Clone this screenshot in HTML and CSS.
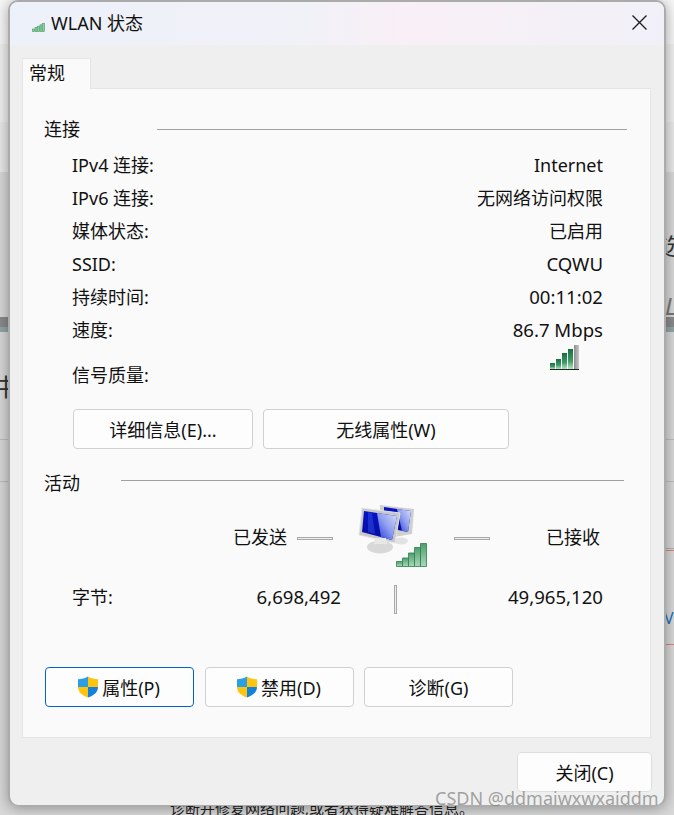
FILE: index.html
```html
<!DOCTYPE html>
<html lang="zh-CN">
<head>
<meta charset="utf-8">
<title>WLAN 状态</title>
<link rel="stylesheet" href="styles.css">
</head>
<body>
<div class="backdrop">
  <div class="bg-band bg-top"></div>
  <div class="bg-band bg-mid"></div>
  <div class="bg-band bg-mid2"></div>
  <div class="bg-band bg-dark"></div>
  <div class="bg-band bg-dark2"></div>
  <div class="bg-rule bg-rule-a"></div>
  <div class="bg-rule bg-rule-b"></div>
  <div class="bg-rule bg-rule-c"></div>
  <div class="bg-rule bg-red-a"></div>
  <div class="bg-rule bg-red-b"></div>
  <span class="bg-text bg-left">中</span>
  <span class="bg-text bg-right">选</span>
  <span class="bg-text bg-right-l">L</span>
  <span class="bg-text bg-right2">V</span>
  <span class="bg-text bg-bottom">诊断并修复网络问题,或者获得疑难解答信息。</span>
</div>

<main class="window">
  <header class="titlebar">
    <svg class="title-icon" viewBox="0 0 13 9" width="13" height="9">
      <g fill="#8fd0a0" stroke="#4a9a66" stroke-width=".6">
        <rect x=".5" y="6" width="2" height="2.600"/>
        <rect x="3" y="4.600" width="2" height="4"/>
        <rect x="5.500" y="3.200" width="2" height="5.400"/>
        <rect x="8" y="1.800" width="2" height="6.800"/>
        <rect x="10.500" y=".4" width="2" height="8.200"/>
      </g>
    </svg>
    <span class="title-text">WLAN 状态</span>
    <svg class="close-x" viewBox="0 0 15 15" width="15" height="15">
      <path d="M.5.5 14.500 14.500M14.500.5.5 14.500" stroke="#1a1a1a" stroke-width="1.300" fill="none"/>
    </svg>
  </header>

  <div class="tabs"><div class="tab">常规</div></div>

  <section class="panel">
    <div class="group-head head-conn"><span class="group-label">连接</span><span class="group-line"></span></div>
    <dl class="info">
      <div class="row"><dt>IPv4 连接:</dt><dd>Internet</dd></div>
      <div class="row"><dt>IPv6 连接:</dt><dd>无网络访问权限</dd></div>
      <div class="row"><dt>媒体状态:</dt><dd>已启用</dd></div>
      <div class="row"><dt>SSID:</dt><dd class="num">CQWU</dd></div>
      <div class="row"><dt>持续时间:</dt><dd class="num">00:11:02</dd></div>
      <div class="row"><dt>速度:</dt><dd class="num">86.7 Mbps</dd></div>
      <div class="row row-signal">
        <dt>信号质量:</dt>
        <dd>
          <svg class="signal" viewBox="0 0 31 26" width="31" height="26">
            <defs>
              <linearGradient id="bar" x1="0" y1="0" x2="0" y2="1">
                <stop offset="0" stop-color="#14703f"/>
                <stop offset=".6" stop-color="#3f9c68"/>
                <stop offset="1" stop-color="#b6e4c6"/>
              </linearGradient>
              <linearGradient id="barg" x1="0" y1="0" x2="1" y2="0">
                <stop offset="0" stop-color="#8c8c8c"/>
                <stop offset="1" stop-color="#c8c8c8"/>
              </linearGradient>
            </defs>
            <rect x="1" y="19" width="5" height="6" fill="url(#bar)"/>
            <rect x="7" y="15" width="5" height="10" fill="url(#bar)"/>
            <rect x="13" y="9" width="5" height="16" fill="url(#bar)"/>
            <rect x="19" y="5" width="5" height="20" fill="url(#bar)"/>
            <rect x="25" y="1" width="5" height="24" fill="url(#barg)"/>
            <path d="M1 25.500H30" stroke="#222" stroke-width="1"/>
          </svg>
        </dd>
      </div>
    </dl>
    <div class="btn-row btn-row-info">
      <button class="btn btn-detail" type="button">详细信息(E)...</button>
      <button class="btn btn-wireless" type="button">无线属性(W)</button>
    </div>

    <div class="group-head head-act"><span class="group-label">活动</span><span class="group-line"></span></div>
    <div class="activity">
      <span class="act-sent">已发送</span>
      <span class="dash"></span>
      <svg class="net" viewBox="0 0 72 66" width="72" height="66">
        <defs>
          <linearGradient id="scr" x1="0" y1="0" x2="0" y2="1">
            <stop offset="0" stop-color="#0614c8"/>
            <stop offset="1" stop-color="#060c9a"/>
          </linearGradient>
          <linearGradient id="gloss" x1="1" y1="0" x2="0" y2="1">
            <stop offset="0" stop-color="#d8defa"/>
            <stop offset=".5" stop-color="#8e9df0"/>
            <stop offset="1" stop-color="#2036dc"/>
          </linearGradient>
          <linearGradient id="sig" x1="0" y1="0" x2="0" y2="1">
            <stop offset="0" stop-color="#4f9e6e"/>
            <stop offset="1" stop-color="#a9d9b8"/>
          </linearGradient>
        </defs>
        <path d="M24 2 58 6 56 31 38 34 24 20Z" fill="#cfcfcf"/>
        <path d="M28 4 55 8 52 29 42 27 28 22Z" fill="url(#scr)"/>
        <path d="M41 6 55 8 52 29 46 28Z" fill="url(#gloss)"/>
        <ellipse cx="45" cy="38" rx="7" ry="3.500" fill="#e2e2e2"/>
        <path d="M6 5 44 10 39 40 3 32Z" fill="#c8c8c8" stroke="#e4e4e4"/>
        <path d="M8 8 41 13 36 37 6 29Z" fill="url(#scr)"/>
        <path d="M21 10 41 13 36 37 25 34Z" fill="url(#gloss)"/>
        <path d="M12 9 16 10 19 31 12 29Z" fill="#2f4ae0" opacity=".55"/>
        <ellipse cx="24" cy="44" rx="13" ry="6.500" fill="#d8d8d8"/>
        <path d="M19 35h11l1 6H18Z" fill="#e8e8e8"/>
        <g fill="url(#sig)" stroke="#2f7d50" stroke-width=".8">
          <path d="M40.500 58.500h6v5h-6Z"/>
          <path d="M46.500 55h6v8.500h-6Z"/>
          <path d="M52.500 50h6v13.500h-6Z"/>
          <path d="M58.500 44.500h6v19h-6Z"/>
          <path d="M64.500 40.500h6v23h-6Z"/>
        </g>
      </svg>
      <span class="dash dash-r"></span>
      <span class="act-recv">已接收</span>
    </div>
    <div class="bytes">
      <span class="bytes-label">字节:</span>
      <span class="bytes-sent num">6,698,492</span>
      <span class="vdash"></span>
      <span class="bytes-recv num">49,965,120</span>
    </div>
    <div class="btn-row btn-row-act">
      <button class="btn btn-act btn-focus" type="button">
        <svg class="shield" viewBox="0 0 22 22" width="22" height="22"><use href="#shield"/></svg>属性(P)
      </button>
      <button class="btn btn-act" type="button">
        <svg class="shield" viewBox="0 0 22 22" width="22" height="22"><use href="#shield"/></svg>禁用(D)
      </button>
      <button class="btn btn-act btn-last" type="button">诊断(G)</button>
    </div>
  </section>

  <footer class="footer">
    <button class="btn btn-close" type="button">关闭(C)</button>
  </footer>
</main>

<span class="watermark">CSDN @ddmaiwxwxaiddm</span>

<svg class="defs" width="0" height="0">
  <defs>
    <g id="shield">
      <path d="M11 0.500C8 2.500 4.500 3.200 1 3.200V11H11Z" fill="#2a9fe6"/>
      <path d="M11 0.500C14 2.500 17.500 3.200 21 3.200V11H11Z" fill="#ffc40d"/>
      <path d="M1 11C1 16 5 19.500 11 21.500V11Z" fill="#ffc40d"/>
      <path d="M21 11C21 16 17 19.500 11 21.500V11Z" fill="#1482d8"/>
    </g>
  </defs>
</svg>
</body>
</html>
```

FILE: styles.css
```css
* { box-sizing: border-box; }
html, body { margin: 0; padding: 0; }
body {
  width: 674px;
  height: 815px;
  position: relative;
  overflow: hidden;
  background: #d8d8d8;
  font-family: "Noto Sans", "Noto Sans CJK SC", sans-serif;
  font-size: 18px;
  color: #111;
}

/* what shows behind the dialog */
.backdrop { position: absolute; inset: 0; overflow: hidden; }
.bg-band { position: absolute; left: 0; right: 0; }
.bg-top { top: 0; height: 44px; background: #f6f6f6; }
.bg-mid { top: 44px; height: 78px; background: #efefef; }
.bg-mid2 { top: 122px; height: 50px; background: #e8e8e8; }
.bg-dark { top: 317px; height: 10px; background: #8a8a8a; }
.bg-dark2 { top: 327px; height: 5px; background: #93a5a5; }
.bg-rule { position: absolute; left: 0; right: 0; height: 1px; background: #bdbdbd; }
.bg-rule-a { top: 439px; }
.bg-rule-b { top: 481px; }
.bg-rule-c { top: 548px; left: 665px; background: #b0b0b0; }
.bg-red-a { top: 550px; left: 665px; background: #e5817f; }
.bg-red-b { top: 644px; left: 665px; background: #e5817f; }
.bg-text { position: absolute; font-size: 24px; line-height: 28px; color: #333; }
.bg-left { left: -6px; top: 373px; }
.bg-right { left: 660px; top: 232px; }
.bg-right-l { left: 665px; top: 292px; color: #777; font-style: italic; }
.bg-right2 { left: 664px; top: 604px; color: #1f6fc0; font-size: 16px; }
.bg-bottom { left: 170px; top: 797px; font-size: 15px; line-height: 22px; color: #222; }

/* dialog */
.window {
  position: absolute;
  left: 8px;
  top: 0;
  width: 658px;
  height: 806px;
  display: flex;
  flex-direction: column;
  background: #efefef;
  border: 2px solid #ababab;
  border-bottom-width: 1px;
  border-radius: 10px;
  box-shadow: 0 2px 14px rgba(0, 0, 0, .35);
  overflow: hidden;
}
.titlebar {
  flex: none;
  height: 43px;
  display: flex;
  align-items: center;
  padding: 0 17px 0 22px;
  background: linear-gradient(90deg, #edf1fa 0%, #f1f1f8 45%, #f9eff6 60%, #f1f0f8 100%);
}
.title-icon { flex: none; margin: 8px 6px 0 0; }
.title-text { flex: 1; line-height: 24px; margin-top: -2px; }
.close-x { flex: none; margin-top: -2px; }

.tabs { flex: none; height: 43px; padding: 13px 0 0 12px; }
.tab {
  width: 69px;
  height: 31px;
  background: #fafafa;
  border: 1px solid #e5e5e5;
  border-bottom: 0;
  line-height: 28px;
  padding-left: 6px;
  position: relative;
  z-index: 1;
}

.panel {
  flex: none;
  width: 629px;
  height: 650px;
  margin-left: 12px;
  background: #fafafa;
  border: 1px solid #e5e5e5;
  padding: 30px 0 0 21px;
}
.group-head { display: flex; align-items: center; height: 20px; }
.group-label { flex: none; line-height: 20px; }
.group-line { flex: none; height: 1px; background: #a0a0a0; }
.head-conn .group-label { width: 113px; }
.head-conn .group-line { width: 470px; }
.head-act { margin-top: 21px; }
.head-act .group-label { width: 77px; position: relative; top: 3px; }
.head-act .group-line { width: 503px; }

.info { margin: 9px 0 0; padding: 0 0 0 28px; width: 559px; }
.row { display: flex; justify-content: space-between; align-items: center; height: 33px; }
.row dt, .row dd { margin: 0; line-height: 24px; white-space: nowrap; }
.num { font-size: 18.6px; }
.row-signal { height: 58px; align-items: flex-start; }
.row-signal dt { margin-top: 17px; }
.row-signal dd { margin: -2px 23px 0 0; }
.signal { display: block; }

.btn-row { display: flex; }
.btn-row-info { margin: 5px 0 0 29px; gap: 10px; }
.btn-row-act { margin: 55px 0 0 1px; gap: 11px; }
.btn {
  height: 40px;
  padding: 0;
  display: flex;
  align-items: center;
  justify-content: center;
  background: #fdfdfd;
  border: 1px solid #d0d0d0;
  border-radius: 4px;
  font: inherit;
  color: inherit;
}
.btn-detail { width: 180px; }
.btn-wireless { width: 246px; }
.btn-act { width: 149px; }
.btn-last { margin-left: -1px; }
.btn-focus { border-color: #0067c0; }
.shield { flex: none; margin-left: -2px; margin-right: 3px; }

.activity { height: 88px; margin-top: 9px; display: flex; align-items: center; }
.act-sent { margin-left: 189px; line-height: 24px; position: relative; top: -6px; }
.dash {
  flex: none;
  width: 36px;
  height: 3px;
  margin-left: 10px;
  border: 1px solid #a8a8a8;
  background: #eee;
  position: relative;
  top: -5px;
}
.net { flex: none; margin-left: 23px; position: relative; top: -7px; }
.dash-r { margin-left: 26px; }
.act-recv { margin-left: 56px; line-height: 24px; position: relative; top: -6px; }

.bytes { display: flex; align-items: center; height: 30px; margin-top: -5px; padding-left: 28px; }
.bytes-label { width: 184px; line-height: 24px; }
.bytes-sent { width: 85px; text-align: right; line-height: 24px; white-space: nowrap; }
.vdash {
  flex: none;
  width: 3px;
  height: 29px;
  margin-left: 53px;
  border: 1px solid #a8a8a8;
  background: #eee;
  position: relative;
  top: 2px;
}
.bytes-recv { width: 206px; text-align: right; line-height: 24px; white-space: nowrap; }

.footer { flex: 1; display: flex; justify-content: flex-end; padding: 14px 12px 0 0; }
.btn-close { width: 135px; height: 40px; border-color: #dedede; }

.watermark {
  position: absolute;
  left: 435px;
  top: 786px;
  font-family: "Noto Sans", sans-serif;
  font-size: 18px;
  line-height: 24px;
  color: rgba(125, 125, 125, .7);
  white-space: nowrap;
}
.defs { position: absolute; }
```
